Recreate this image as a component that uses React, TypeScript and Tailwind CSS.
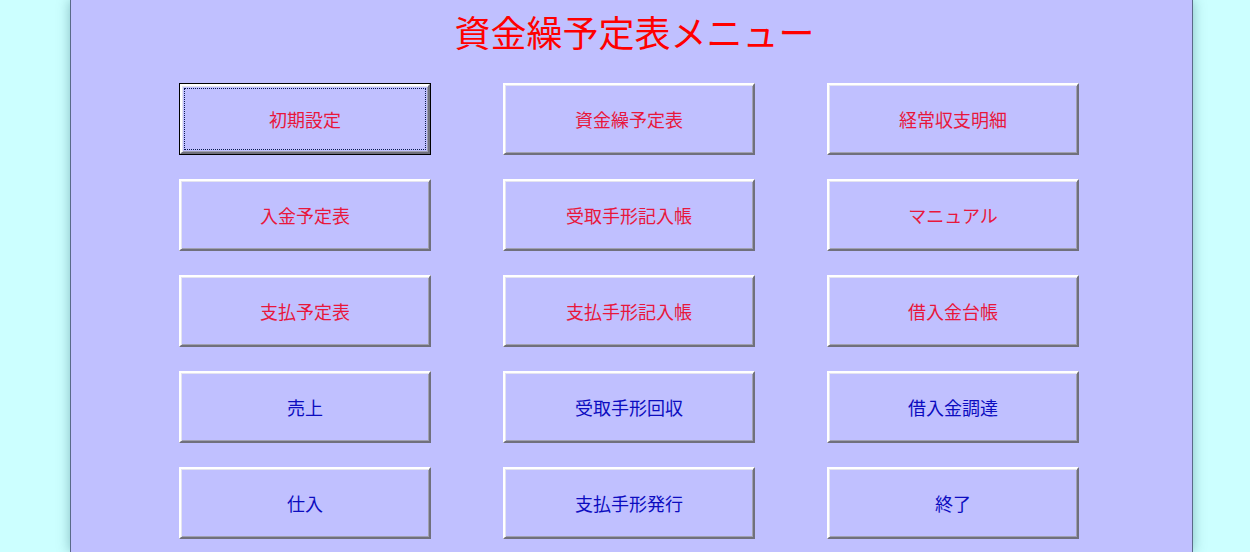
import React from "react";

const rows: string[][] = [
  ["初期設定", "資金繰予定表", "経常収支明細"],
  ["入金予定表", "受取手形記入帳", "マニュアル"],
  ["支払予定表", "支払手形記入帳", "借入金台帳"],
  ["売上", "受取手形回収", "借入金調達"],
  ["仕入", "支払手形発行", "終了"],
];

function Btn({ label, red, focused }: { label: string; red: boolean; focused: boolean }) {
  const color = red ? "text-[#e8173c]" : "text-[#0c0cc0]";
  if (focused) {
    return (
      <button className="h-[72px] w-[252px] border border-black bg-[#c0c0ff] p-0">
        <div className="h-full w-full border-2 border-t-white border-l-white border-b-[#70707c] border-r-[#70707c] p-[2px] shadow-[inset_1px_1px_0_#e4e4f0,inset_-1px_-1px_0_#a0a0b0]">
          <div className={`flex h-full w-full items-center justify-center border border-dotted border-[#0a1a50] text-[18px] leading-none ${color}`}>
            {label}
          </div>
        </div>
      </button>
    );
  }
  return (
    <button
      className={`flex h-[72px] w-[252px] items-center justify-center border-2 border-t-white border-l-white border-b-[#70707c] border-r-[#70707c] bg-[#c0c0ff] p-0 text-[18px] leading-none shadow-[inset_1px_1px_0_#e4e4f0,inset_-1px_-1px_0_#a0a0b0] ${color}`}
    >
      {label}
    </button>
  );
}

export default function App() {
  return (
    <div
      className="flex h-[552px] w-[1250px] justify-start overflow-hidden bg-[#ccffff]"
      style={{ fontFamily: '"Noto Sans CJK JP", "Noto Sans", sans-serif' }}
    >
      <div className="ml-[70px] h-[552px] w-[1123px] border-x border-[#5a6a88] bg-[#c0c0ff] shadow-[0_0_12px_rgba(0,70,80,0.35)]">
        <h1 className="m-0 pl-[6px] pt-[11px] text-center text-[36px] font-normal leading-[40px] text-[#ff0000]">
          資金繰予定表メニュー
        </h1>
        <div className="mt-[32px] grid grid-cols-[252px_252px_252px] gap-x-[72px] gap-y-[24px] pl-[108px]">
          {rows.map((r, ri) =>
            r.map((label, ci) => (
              <Btn key={`${ri}-${ci}`} label={label} red={ri < 3} focused={ri === 0 && ci === 0} />
            ))
          )}
        </div>
      </div>
    </div>
  );
}
